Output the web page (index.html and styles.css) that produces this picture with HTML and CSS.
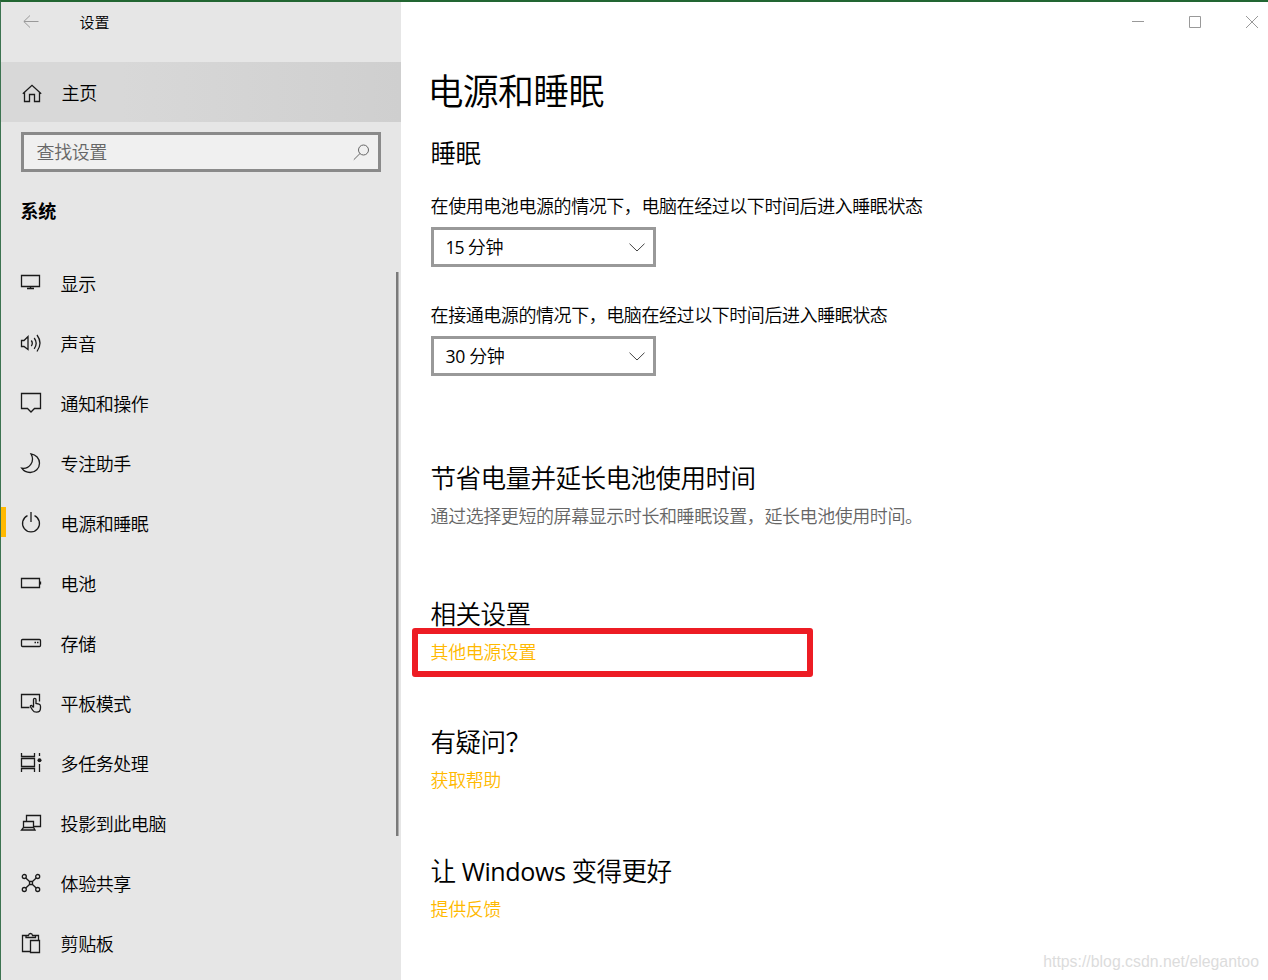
FILE: index.html
```html
<!DOCTYPE html>
<html lang="zh-CN">
<head>
  <meta charset="UTF-8" />
  <meta name="viewport" content="width=device-width, initial-scale=1.0">
  <title>设置</title>
  <link rel="stylesheet" href="styles.css">
</head>
<body>

  <div class="sidebar">
    <div class="titlebar">
      <svg class="back" width="16" height="14" viewBox="0 0 16 14"><path d="M15.5 6.5H1M7 .5L.8 6.5L7 12.5"/></svg>
      <span>设置</span>
    </div>

    <a class="home" href="#">
      <svg class="icon" viewBox="0 0 24 24"><path d="M3.8 13.7L13 5.3L22.2 13.7M5.5 12.5V21.5H10.5V14.5H15.5V21.5H20.5V12.5"/></svg>
      <span>主页</span>
    </a>

    <div class="search">
      <input type="text" placeholder="查找设置">
      <svg width="17" height="17" viewBox="0 0 17 17"><circle cx="10.5" cy="6" r="5"/><path d="M7 9.5L.8 15.7"/></svg>
    </div>

    <h3>系统</h3>

    <nav>
      <a href="#">
        <svg class="icon" viewBox="0 0 24 24"><path d="M2.5 3.5H20.5V14.5H2.5ZM11.5 14.5V16.5M8 16.5H15"/></svg>
        <span>显示</span>
      </a>
      <a href="#">
        <svg class="icon" viewBox="0 0 24 24"><path d="M2.5 8.5H5L9 4.5V17.5L5 14.5H2.5ZM12.3 8.5Q14.3 11.3 12.3 14M15.2 6Q19.2 11.3 15.2 16.8M18 3Q24 11 18 19.5"/></svg>
        <span>声音</span>
      </a>
      <a href="#">
        <svg class="icon" viewBox="0 0 24 24"><path d="M2.5 1.5H21.5V16.5H15.5L12 20L8.5 16.5H2.5Z"/></svg>
        <span>通知和操作</span>
      </a>
      <a href="#">
        <svg class="icon" viewBox="0 0 24 24"><path d="M12 1.8C17 2.5 20.5 6.5 20.5 11.2C20.5 16.4 16.3 20.5 11.2 20.5C7.5 20.5 4.5 18.8 2.7 16.2C10 17.5 16.5 9.5 12 1.8Z"/></svg>
        <span>专注助手</span>
      </a>
      <a href="#" class="active">
        <svg class="icon" viewBox="0 0 24 24"><path d="M8.5 3.6A8.5 8.5 0 1 0 15.5 3.6M12 0V10"/></svg>
        <span>电源和睡眠</span>
      </a>
      <a href="#">
        <svg class="icon" viewBox="0 0 24 24"><path d="M2.5 6.5H20.5V15.5H2.5ZM21.5 9.5V12.5"/></svg>
        <span>电池</span>
      </a>
      <a href="#">
        <svg class="icon" viewBox="0 0 24 24"><rect x="2.5" y="7.5" width="19" height="7" rx="1"/><path d="M15.5 10.5H17M18 10.5H19.5"/></svg>
        <span>存储</span>
      </a>
      <a href="#">
        <svg class="icon" viewBox="0 0 24 24"><path d="M10.5 15.5H2.5V2.5H20.5V9.5M14.5 15.5V7.5Q14.5 6.3 15.7 6.3Q17 6.3 17 7.5V11.5L20 12.2Q21.5 12.7 21.5 14.2V16Q21.5 20.2 17.5 20.2Q14.8 20.2 13.5 18L11.5 14.8Q11 13.3 12.5 13.3L14.5 15.5"/></svg>
        <span>平板模式</span>
      </a>
      <a href="#">
        <svg class="icon" viewBox="0 0 24 24"><path d="M2.5 1V4.5H15.5V1M2.5 6.5H15.5V14.5H2.5ZM2.5 20V16.5H15.5V20M20.5 1V4M20.5 12V20"/><circle class="dot" cx="20.5" cy="8.3" r="2"/></svg>
        <span>多任务处理</span>
      </a>
      <a href="#">
        <svg class="icon" viewBox="0 0 24 24"><path d="M7.5 9.5V3.5H21.5V14.5H15M4.5 15.5V9.5H14.5V15.5M4.5 15.5H14.5L16 18H2.5Z"/></svg>
        <span>投影到此电脑</span>
      </a>
      <a href="#">
        <svg class="icon" viewBox="0 0 24 24"><circle cx="5.3" cy="4.5" r="2"/><circle cx="18.7" cy="4.5" r="2"/><circle cx="5.3" cy="17.5" r="2"/><circle cx="18.7" cy="17.5" r="2"/><path d="M10.5 9.5H13.5V12.5H10.5ZM6.8 6L10.5 9.5M17.2 6L13.5 9.5M6.8 16L10.5 12.5M17.2 16L13.5 12.5"/></svg>
        <span>体验共享</span>
      </a>
      <a href="#">
        <svg class="icon" viewBox="0 0 24 24"><path d="M11 19.5H3.5V3.5H7M16.5 3.5H19.5V8M7 5.5V3.5H9.5Q9.7 1.5 11.5 1.5Q13.3 1.5 13.5 3.5H16.5V5.5ZM11.5 8.5H20.5V20.5H11.5Z"/></svg>
        <span>剪贴板</span>
      </a>
      <div class="scrollbar"></div>
    </nav>
  </div>

  <div class="main">
    <div class="window-buttons">
      <svg viewBox="0 0 12 12"><path d="M0 5.5H12"/></svg>
      <svg viewBox="0 0 12 12"><path d="M.5 .5H11.5V11.5H.5Z"/></svg>
      <svg viewBox="0 0 12 12"><path d="M0 0L12 12M12 0L0 12"/></svg>
    </div>

    <h1>电源和睡眠</h1>

    <section class="sleep">
      <h2>睡眠</h2>
      <div class="field">
        <label>在使用电池电源的情况下，电脑在经过以下时间后进入睡眠状态</label>
        <div class="select">
          <span><span class="latin narrow">15</span> 分钟</span>
          <svg width="16" height="9" viewBox="0 0 16 9"><path d="M.5 .7L8 8L15.5 .7"/></svg>
        </div>
      </div>
      <div class="field">
        <label>在接通电源的情况下，电脑在经过以下时间后进入睡眠状态</label>
        <div class="select">
          <span><span class="latin">30</span> 分钟</span>
          <svg width="16" height="9" viewBox="0 0 16 9"><path d="M.5 .7L8 8L15.5 .7"/></svg>
        </div>
      </div>
    </section>

    <section class="saving">
      <h2>节省电量并延长电池使用时间</h2>
      <p>通过选择更短的屏幕显示时长和睡眠设置，延长电池使用时间。</p>
    </section>

    <section class="related">
      <h2>相关设置</h2>
      <a href="#" class="marked">其他电源设置</a>
    </section>

    <section>
      <h2>有疑问？</h2>
      <a href="#">获取帮助</a>
    </section>

    <section>
      <h2>让 <span class="latin">Windows</span> 变得更好</h2>
      <a href="#">提供反馈</a>
    </section>

    <div class="watermark">https://blog.csdn.net/elegantoo</div>
  </div>

</body>
</html>
```
FILE: styles.css
```css
* {
  box-sizing: border-box;
}
body {
  margin: 0;
  height: 980px;
  overflow: hidden;
  display: flex;
  border-top: 2px solid #226632;
  border-left: 1px solid #3c7350;
  background: #fff;
  color: #000;
  font-family: "Open Sans", "Noto Sans CJK SC", sans-serif;
  font-size: 18px;
  font-weight: 350;
  line-height: 24px;
  letter-spacing: -0.43px;
  text-indent: 0.6px;
}
h1, h2, h3, p {
  margin: 0;
  font-weight: 350;
}
a {
  text-decoration: none;
}
svg {
  fill: none;
  stroke: #1a1a1a;
  flex-shrink: 0;
}

.sidebar {
  width: 400px;
  flex-shrink: 0;
  background: #e6e6e6;
}
.titlebar {
  height: 60px;
  padding: 8px 0 0 21px;
  display: flex;
  align-items: flex-start;
  font-size: 15px;
  letter-spacing: 0;
}
.titlebar .back {
  margin: 5px 40px 0 1px;
  stroke: #999;
}

.home {
  height: 60px;
  padding-left: 18px;
  display: flex;
  align-items: center;
  color: #000;
  background: linear-gradient(to right, #d8d8d8 30%, #cfcfcf);
}
.icon {
  width: 24px;
  height: 24px;
  margin-right: 17px;
  stroke-width: 1.3;
}
.home .icon {
  margin-right: 18px;
}
.home span {
  padding-top: 2px;
}
.dot {
  fill: #1a1a1a;
  stroke: none;
}

.search {
  height: 40px;
  margin: 10px 20px 0;
  padding: 0 8px 0 12px;
  display: flex;
  align-items: center;
  border: 3px solid #8a8a8a;
  background: #f0f0f0;
}
.search input {
  flex: 1;
  min-width: 0;
  padding: 0;
  border: none;
  outline: none;
  background: none;
  font: inherit;
  letter-spacing: inherit;
  text-indent: inherit;
}
.search input::placeholder {
  color: #666;
}
.search svg {
  stroke: #666;
}

h3 {
  margin: 27px 0 31px 19px;
  font-size: 18px;
  font-weight: 700;
}

nav {
  position: relative;
}
nav a {
  height: 60px;
  padding-left: 18px;
  display: flex;
  align-items: center;
  color: #000;
}
nav a span {
  padding-bottom: 1px;
}
nav .active {
  padding-left: 0;
}
nav .active::before {
  content: "";
  width: 5px;
  height: 30px;
  margin: 0 13px 4px 0;
  background: #ffb900;
}
.scrollbar {
  position: absolute;
  top: 18px;
  right: 2px;
  width: 3px;
  height: 564px;
  background: #7a7a7a;
  border-right: 1px solid #b0b0b0;
}

.main {
  flex: 1;
  position: relative;
  padding-left: 29px;
}
.window-buttons {
  height: 40px;
  padding-right: 10px;
  display: flex;
  align-items: center;
  justify-content: flex-end;
  gap: 45px;
}
.window-buttons svg {
  width: 12px;
  height: 12px;
  stroke: #999;
}

h1 {
  margin: 25px 0 21px -3px;
  font-size: 36px;
  line-height: 50px;
  letter-spacing: -0.8px;
}
h2 {
  margin-bottom: 9px;
  font-size: 25.6px;
  line-height: 32px;
  letter-spacing: -0.6px;
}
.latin {
  font-size: 0.98em;
  font-weight: 390;
  letter-spacing: -0.4px;
}
section {
  margin-bottom: 63px;
}
.sleep {
  margin-bottom: 87px;
}
.sleep h2 {
  margin-bottom: 24px;
}
.saving {
  margin-bottom: 71px;
}
section p {
  color: #666;
}
section a {
  display: block;
  color: #ffb900;
}

.field {
  margin-bottom: 36px;
}
.field:last-child {
  margin-bottom: 0;
}
.field label {
  display: block;
  margin-bottom: 9px;
}
.select {
  width: 225px;
  height: 40px;
  margin-left: 1px;
  padding: 0 8px 0 11px;
  display: flex;
  align-items: center;
  justify-content: space-between;
  border: 3px solid #999;
}
.select .narrow {
  letter-spacing: -1.1px;
}
.select svg {
  stroke: #444;
}

.marked {
  position: relative;
}
.marked::after {
  content: "";
  position: absolute;
  box-sizing: border-box;
  top: -12px;
  left: -18px;
  width: 401px;
  height: 49px;
  border: 6px solid #ed1c24;
  border-radius: 3px;
}

.watermark {
  position: absolute;
  right: 9px;
  bottom: 6px;
  color: #dcdcdc;
  font-family: "Liberation Sans", Arial, sans-serif;
  font-size: 15.85px;
  font-weight: 400;
  letter-spacing: 0;
}
```
